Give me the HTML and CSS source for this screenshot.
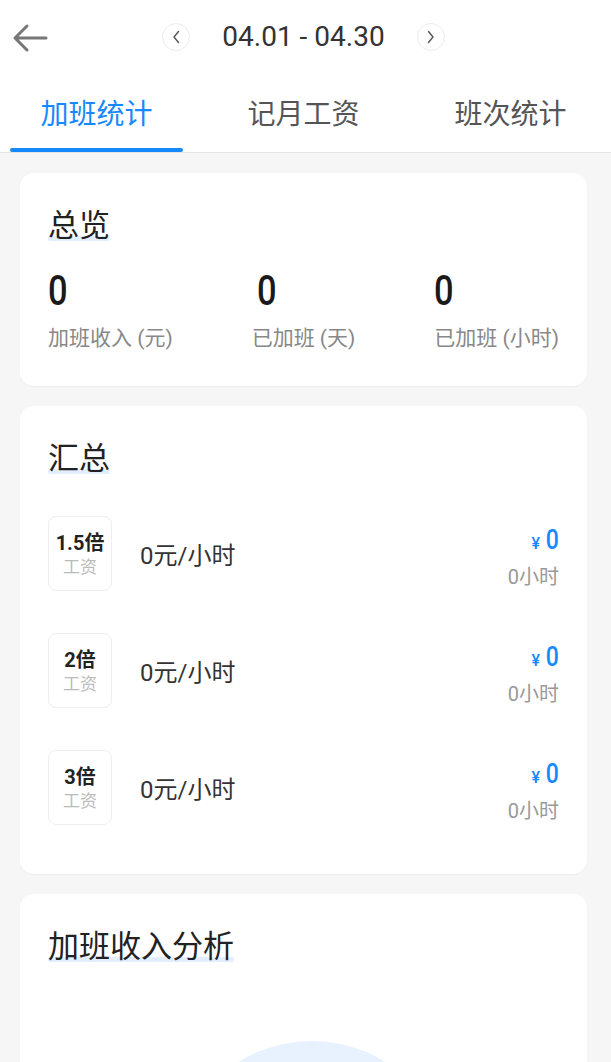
FILE: index.html
```html
<!DOCTYPE html>
<html lang="zh-CN">
<head>
    <meta charset="UTF-8">
    <title>加班统计</title>
    <link rel="stylesheet" href="styles.css">
</head>
<body>
    <header class="topbar">
        <a class="back">
            <svg width="38" height="30" viewBox="0 0 38 30">
                <path d="M35 15H4M16 3L4 15L16 27" fill="none" stroke="#777" stroke-width="3" stroke-linecap="round" stroke-linejoin="round"/>
            </svg>
        </a>
        <div class="range">
            <span class="circle-btn">
                <svg width="10" height="14" viewBox="0 0 10 14"><path d="M7.5 1.5L3 7L7.5 12.5" fill="none" stroke="#555" stroke-width="1.4" stroke-linecap="round" stroke-linejoin="round"/></svg>
            </span>
            <span class="range-text">04.01 - 04.30</span>
            <span class="circle-btn">
                <svg width="10" height="14" viewBox="0 0 10 14"><path d="M2.5 1.5L7 7L2.5 12.5" fill="none" stroke="#555" stroke-width="1.4" stroke-linecap="round" stroke-linejoin="round"/></svg>
            </span>
        </div>
    </header>

    <ul class="tabs">
        <li class="tab active">加班统计</li>
        <li class="tab">记月工资</li>
        <li class="tab">班次统计</li>
    </ul>

    <div class="content">
        <!-- 总览 -->
        <section class="card overview">
            <h2 class="card-title"><span class="mark">总览</span></h2>
            <div class="stats">
                <div class="stat">
                    <div class="stat-num"><span class="digit">0</span></div>
                    <div class="stat-label">加班收入 (元)</div>
                </div>
                <div class="stat">
                    <div class="stat-num shift"><span class="digit">0</span></div>
                    <div class="stat-label">已加班 (天)</div>
                </div>
                <div class="stat">
                    <div class="stat-num"><span class="digit">0</span></div>
                    <div class="stat-label">已加班 (小时)</div>
                </div>
            </div>
        </section>

        <!-- 汇总 -->
        <section class="card summary">
            <h2 class="card-title"><span class="mark">汇总</span></h2>
            <ul class="rates">
                <li class="rate">
                    <div class="rate-box">
                        <span class="rate-mult">1.5倍</span>
                        <span class="rate-sub">工资</span>
                    </div>
                    <div class="rate-price">0元/小时</div>
                    <div class="amount">
                        <div class="amount-main"><span class="yen">¥</span><span class="digit">0</span></div>
                        <div class="amount-sub">0小时</div>
                    </div>
                </li>
                <li class="rate">
                    <div class="rate-box">
                        <span class="rate-mult">2倍</span>
                        <span class="rate-sub">工资</span>
                    </div>
                    <div class="rate-price">0元/小时</div>
                    <div class="amount">
                        <div class="amount-main"><span class="yen">¥</span><span class="digit">0</span></div>
                        <div class="amount-sub">0小时</div>
                    </div>
                </li>
                <li class="rate">
                    <div class="rate-box">
                        <span class="rate-mult">3倍</span>
                        <span class="rate-sub">工资</span>
                    </div>
                    <div class="rate-price">0元/小时</div>
                    <div class="amount">
                        <div class="amount-main"><span class="yen">¥</span><span class="digit">0</span></div>
                        <div class="amount-sub">0小时</div>
                    </div>
                </li>
            </ul>
        </section>

        <!-- 加班收入分析 -->
        <section class="card analysis">
            <h2 class="card-title"><span class="mark">加班收入分析</span></h2>
            <div class="chart">
                <div class="donut"></div>
            </div>
        </section>
    </div>
</body>
</html>
```

FILE: styles.css
```css
/* reset css */
* {
    box-sizing: border-box;
}
ul,li {
    margin: 0;
    padding: 0;
    list-style: none;
}
body {
    margin: 0;
    background: #f6f6f6;
    font-family: Roboto, "Noto Sans CJK SC", sans-serif;
    color: #222;
}
/* header */
.topbar {
    display: grid;
    grid-template-columns: 1fr auto 1fr;
    align-items: center;
    height: 76px;
    padding-right: 4px;
    background: #fff;
}
.back {
    display: flex;
    padding-left: 11px;
    margin-top: -1px;
}
.range {
    display: flex;
    align-items: center;
    gap: 32px;
    margin-top: -2px;
}
.circle-btn {
    display: flex;
    align-items: center;
    justify-content: center;
    width: 28px;
    height: 28px;
    border: 1px solid #ececec;
    border-radius: 50%;
}
.range-text {
    font-size: 28px;
    line-height: 1.2;
    color: #333;
}
/* tabs */
.tabs {
    display: flex;
    gap: 34px;
    padding-left: 10px;
    background: #fff;
    border-bottom: 1px solid #e6e6e6;
}
.tab {
    position: relative;
    display: flex;
    align-items: center;
    justify-content: center;
    width: 173px;
    height: 76px;
    padding-top: 2px;
    font-size: 28px;
    line-height: 1.2;
    color: #555;
}
.tab.active {
    color: #1789fe;
}
.tab.active::after {
    content: '';
    position: absolute;
    left: 0;
    right: 0;
    bottom: 0;
    height: 4px;
    border-radius: 2px;
    background: #1789fe;
}
/* cards */
.content {
    display: flex;
    flex-direction: column;
    gap: 20px;
    padding: 20px 24px 0 20px;
}
.card {
    padding: 34px 28px 35px;
    border-radius: 14px;
    background: #fff;
    box-shadow: 0 1px 2px rgba(0, 0, 0, 0.04);
}
.card-title {
    margin: 0;
    font-size: 31px;
    font-weight: normal;
    line-height: 37px;
    color: #222;
}
.mark {
    position: relative;
    z-index: 0;
}
.mark::after {
    content: '';
    position: absolute;
    left: 0;
    right: 0;
    bottom: 3px;
    height: 5px;
    border-radius: 3px;
    background: #e2eefd;
    z-index: -1;
}
/* narrow number digits */
.digit {
    display: inline-block;
    transform: scaleX(0.82);
    transform-origin: left center;
}
.amount .digit {
    transform-origin: right center;
}
/* overview */
.stats {
    display: flex;
    justify-content: space-between;
    margin-top: 26px;
}
.stat-num {
    font-size: 42px;
    font-weight: 500;
    line-height: 42px;
    color: #1a1a1a;
}
.stat-num.shift {
    padding-left: 5px;
}
.stat-label {
    margin-top: 14px;
    font-size: 21px;
    line-height: 25px;
    color: #888;
}
/* summary */
.summary {
    padding-bottom: 28px;
}
.rates {
    margin-top: 18px;
}
.rate {
    display: flex;
    align-items: center;
    padding: 21px 0;
}
.rate-box {
    display: flex;
    flex-direction: column;
    align-items: center;
    justify-content: center;
    width: 64px;
    height: 75px;
    border: 1px solid #efefef;
    border-radius: 8px;
}
.rate-mult {
    font-size: 20px;
    font-weight: 700;
    line-height: 24px;
    color: #222;
}
.rate-sub {
    margin-top: 2px;
    font-size: 17px;
    line-height: 20px;
    color: #bbb;
}
.rate-price {
    flex: 1;
    margin-left: 28px;
    font-size: 24px;
    color: #333;
}
.amount {
    text-align: right;
}
.amount-main {
    font-size: 28px;
    font-weight: 500;
    line-height: 43px;
    color: #1789fe;
}
.yen {
    margin-right: 3px;
    font-size: 16px;
}
.amount-sub {
    font-size: 20px;
    line-height: 24px;
    color: #999;
}
/* analysis */
.analysis {
    padding-bottom: 0;
}
.chart {
    height: 360px;
    padding-top: 76px;
}
.donut {
    width: 278px;
    height: 278px;
    margin-left: 125px;
    border-radius: 50%;
    background: #e8f2fe;
}
```
